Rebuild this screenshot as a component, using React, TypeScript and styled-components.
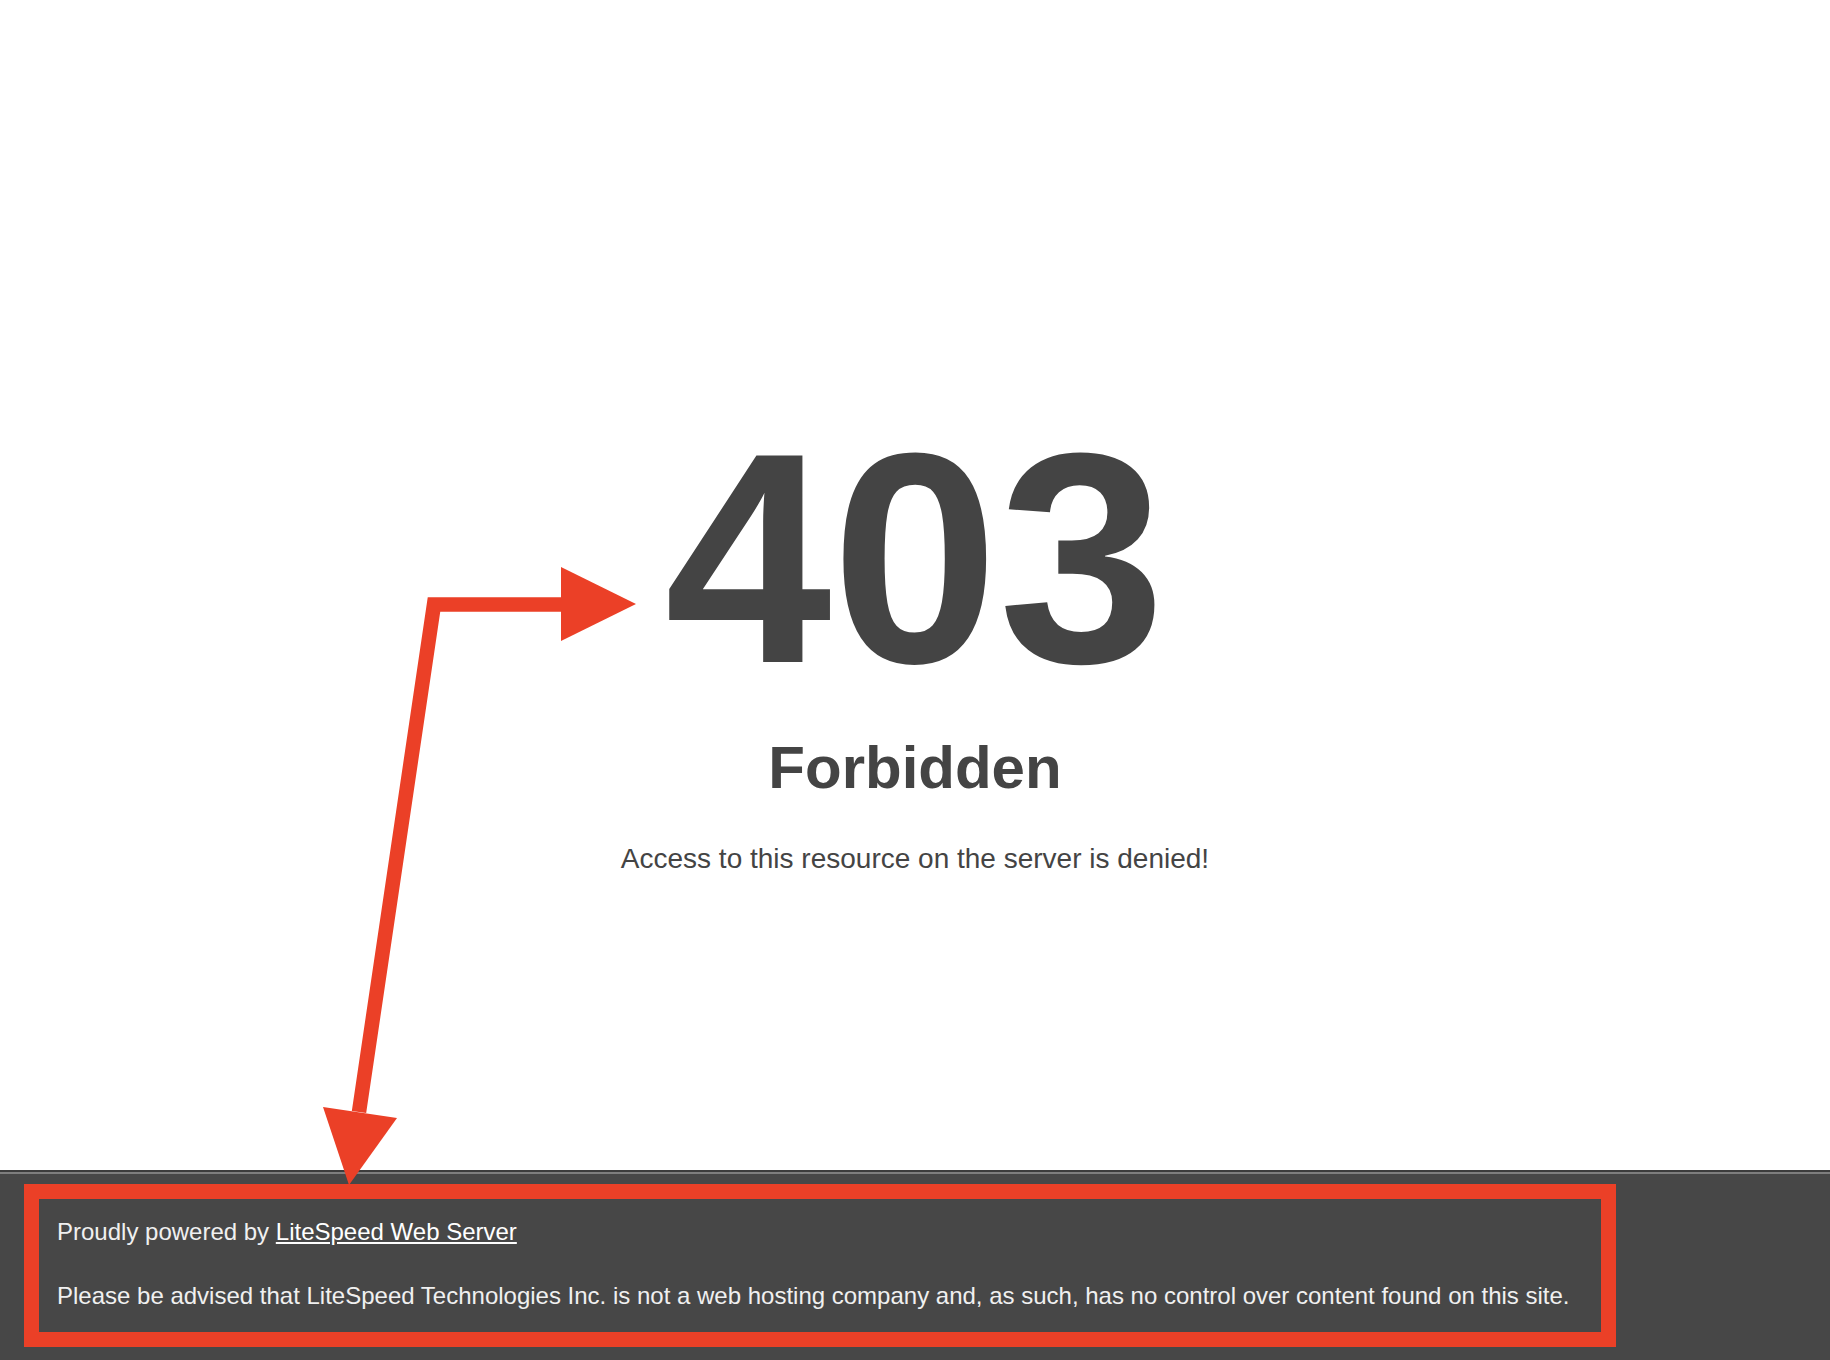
import React from "react";
import styled, { createGlobalStyle } from "styled-components";

const GlobalStyle = createGlobalStyle`
  html, body {
    margin: 0;
    padding: 0;
    background: #ffffff;
  }
  body {
    color: #444444;
    font: normal 28px/40px "Liberation Sans", Arial, Helvetica, sans-serif;
  }
`;

const Page = styled.div`
  position: relative;
  width: 1830px;
  height: 1360px;
  overflow: hidden;
  display: flex;
  flex-direction: column;
`;

const Main = styled.main`
  flex: none;
  height: 1170px;
  box-sizing: border-box;
  padding-top: 408px;
  display: flex;
  justify-content: center;
`;

const Message = styled.div`
  width: 1600px;
  text-align: center;
`;

const Code = styled.h1`
  margin: 0;
  font-size: 300px;
  line-height: 300px;
  font-weight: bold;
`;

const Title = styled.h2`
  margin: 40px 0 50px;
  font-size: 60px;
  line-height: 40px;
  font-weight: bold;
`;

const Text = styled.p`
  margin: 0;
  transform: translateY(1px);
`;

const Footer = styled.footer`
  flex: none;
  height: 200px;
  box-sizing: content-box;
  padding: 40px 58px 0 57px;
  color: #f0f0f0;
  font-size: 24px;
  line-height: 40px;
  background-color: #474747;
  border-top: 2px solid rgba(0, 0, 0, 0.15);
  box-shadow: 0 2px 0 rgba(255, 255, 255, 0.3) inset;
`;

const FooterLink = styled.a`
  color: #ffffff;
  text-decoration: underline;
`;

const FooterNote = styled.p`
  margin: 24px 0;
`;

const Annotations = styled.svg`
  position: absolute;
  top: 0;
  left: 0;
  pointer-events: none;
`;

const RED = "#eb4027";

export default function App() {
  return (
    <>
      <GlobalStyle />
      <Page>
        <Main>
          <Message>
            <Code>403</Code>
            <Title>Forbidden</Title>
            <Text>Access to this resource on the server is denied!</Text>
          </Message>
        </Main>
        <Footer>
          Proudly powered by{" "}
          <FooterLink href="#">LiteSpeed Web Server</FooterLink>
          <FooterNote>
            Please be advised that LiteSpeed Technologies Inc. is not a web
            hosting company and, as such, has no control over content found on
            this site.
          </FooterNote>
        </Footer>
        <Annotations width="1830" height="1360" viewBox="0 0 1830 1360">
          <rect
            x="31.5"
            y="1191.5"
            width="1577"
            height="148"
            fill="none"
            stroke={RED}
            strokeWidth="15"
          />
          <polyline
            points="359,1112 434,604.5 566,604.5"
            fill="none"
            stroke={RED}
            strokeWidth="14.5"
            strokeLinejoin="miter"
          />
          <polygon points="561,567 561,641 636,604" fill={RED} />
          <polygon points="323,1107 397,1118 349,1185" fill={RED} />
        </Annotations>
      </Page>
    </>
  );
}
